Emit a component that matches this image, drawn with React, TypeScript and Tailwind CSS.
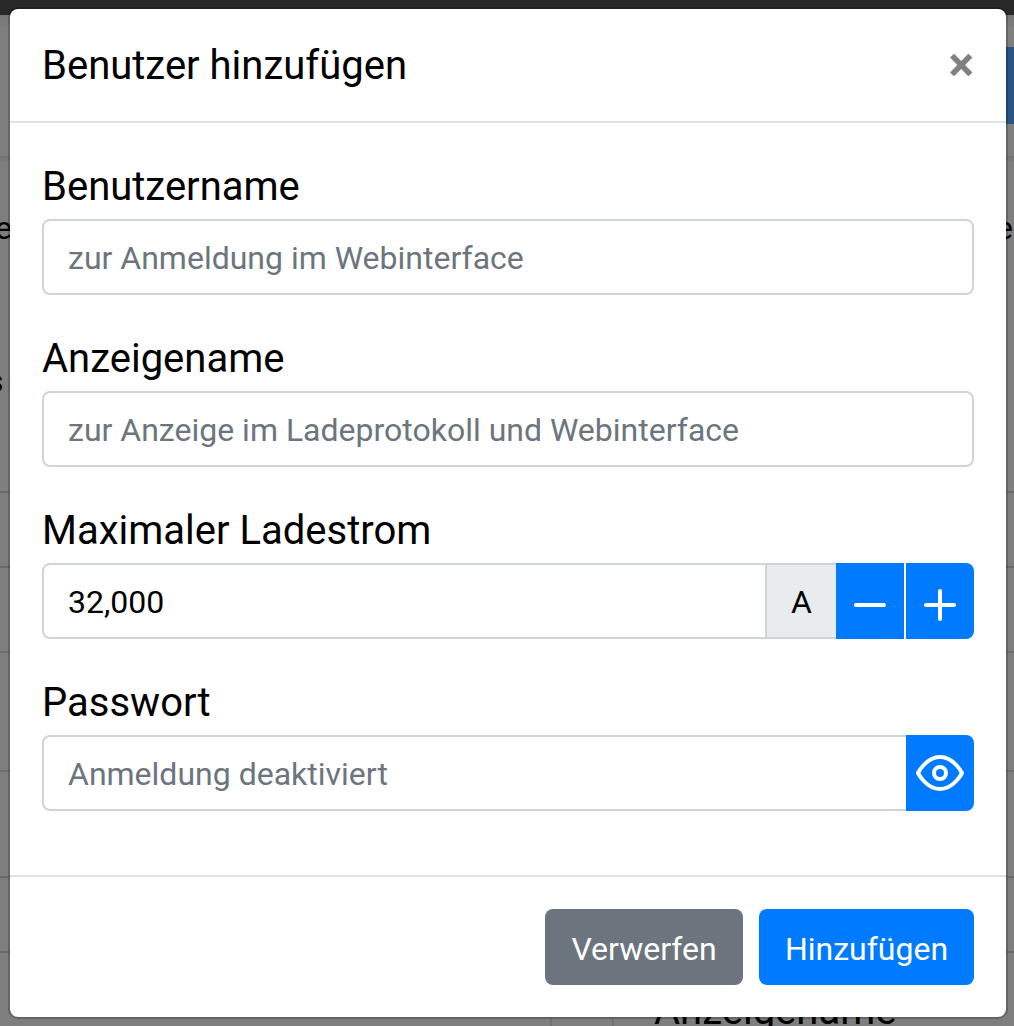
import { ReactNode } from "react";

function Field({ label, children }: { label: string; children: ReactNode }) {
  return (
    <div className="mb-8">
      <label className="mb-2 block h-[56px] pt-[2px] text-[40px] leading-[60px] text-black">{label}</label>
      <div className="flex h-[76px]">{children}</div>
    </div>
  );
}

const control =
  "h-[76px] min-w-0 flex-1 border-2 border-[#ced4da] bg-white px-6 pt-[2px] text-[32px] text-black placeholder-[#6c757d] placeholder:opacity-100 outline-none";

function Icon({ children, className }: { children: ReactNode; className?: string }) {
  return (
    <svg
      className={className}
      width="48"
      height="48"
      viewBox="0 0 24 24"
      fill="none"
      stroke="currentColor"
      strokeWidth="2"
      strokeLinecap="round"
      strokeLinejoin="round"
    >
      {children}
    </svg>
  );
}

function Backdrop() {
  return (
    <div className="absolute inset-0 flex flex-col overflow-hidden bg-[#7e7e7e] text-[32px] leading-[48px] text-black">
      <div className="h-[15px] shrink-0 bg-[#292929]" />
      <div className="flex h-[141px] shrink-0 justify-end bg-gradient-to-b from-[#757575] via-[#7f7f7f] via-10% to-[#7f7f7f] pt-[32px]">
        <div className="h-[77px] w-[10px] bg-[#2b5483]" />
      </div>
      <div className="h-[337px] shrink-0 border-b-2 border-[#6b6b6b] bg-gradient-to-b from-[#717171] to-[#7f7f7f] to-2%">
        <div className="flex h-[48px] translate-y-[48px] justify-between">
          <span className="-ml-[5px]">e</span>
          <span className="mr-[1px]">e</span>
        </div>
        <div className="-ml-[13px] mt-[105px] h-[48px] translate-y-[48px]">s</div>
      </div>
      <div className="h-[75px] shrink-0 border-b-2 border-[#666a6e]" />
      <div className="h-[85px] shrink-0 border-b-2 border-[#6e6e6e]" />
      <div className="h-[119px] shrink-0 border-b-2 border-[#6e6e6e]" />
      <div className="h-[106px] shrink-0 border-b-2 border-[#666a6e]" />
      <div className="h-[75px] shrink-0 border-b-2 border-[#666a6e]" />
      <div className="flex h-[73px] shrink-0">
        <div className="ml-[550px] w-[64px] shrink-0 border-x-2 border-[#717171]" />
        <div className="ml-[40px] mt-[28px] text-[40px] leading-[60px]">Anzeigename</div>
      </div>
    </div>
  );
}

export default function App() {
  return (
    <div className="relative h-[1026px] w-[1014px] overflow-hidden font-['Roboto',sans-serif]">
      <Backdrop />
      <div
        role="dialog"
        className="relative ml-2 mt-[7px] w-[1000px] rounded-[10px] border-2 border-black/20 bg-white bg-clip-padding"
      >
        <header className="flex h-[114px] items-center justify-between border-b-2 border-[#dee2e6] px-8">
          <h5 className="pt-[2px] text-[40px] leading-[60px] text-black">Benutzer hinzufügen</h5>
          <button className="text-[48px] font-bold leading-[48px] text-[#808080]">×</button>
        </header>
        <div className="h-[752px] px-8 pt-8">
          <Field label="Benutzername">
            <input className={`${control} rounded-lg`} placeholder="zur Anmeldung im Webinterface" />
          </Field>
          <Field label="Anzeigename">
            <input className={`${control} rounded-lg`} placeholder="zur Anzeige im Ladeprotokoll und Webinterface" />
          </Field>
          <Field label="Maximaler Ladestrom">
            <input className={`${control} rounded-l-lg`} defaultValue="32,000" />
            <span className="-ml-[2px] flex w-[71px] items-center justify-center border-2 border-r-0 border-[#ced4da] bg-[#e9ecef] pt-[2px] text-[32px] text-black">
              A
            </span>
            <button className="flex w-[68px] items-center justify-center bg-[#007bff] pt-2 text-white">
              <Icon>
                <line x1="5" y1="12" x2="19" y2="12" />
              </Icon>
            </button>
            <button className="ml-[2px] flex w-[68px] items-center justify-center rounded-r-lg bg-[#007bff] pt-2 text-white">
              <Icon>
                <line x1="12" y1="5" x2="12" y2="19" />
                <line x1="5" y1="12" x2="19" y2="12" />
              </Icon>
            </button>
          </Field>
          <Field label="Passwort">
            <input className={`${control} rounded-l-lg border-r-0`} placeholder="Anmeldung deaktiviert" />
            <button className="flex w-[68px] items-center justify-center rounded-r-lg bg-[#007bff] text-white">
              <Icon>
                <path d="M1 12s4-8 11-8 11 8 11 8-4 8-11 8-11-8-11-8z" />
                <circle cx="12" cy="12" r="3" />
              </Icon>
            </button>
          </Field>
        </div>
        <footer className="flex h-[142px] items-start justify-end gap-4 border-t-2 border-[#dee2e6] px-8 pt-8 text-[32px] text-white">
          <button className="h-[76px] w-[198px] rounded-lg bg-[#6c757d] pt-[4px]">Verwerfen</button>
          <button className="h-[76px] w-[215px] rounded-lg bg-[#007bff] pt-[4px]">Hinzufügen</button>
        </footer>
      </div>
    </div>
  );
}
